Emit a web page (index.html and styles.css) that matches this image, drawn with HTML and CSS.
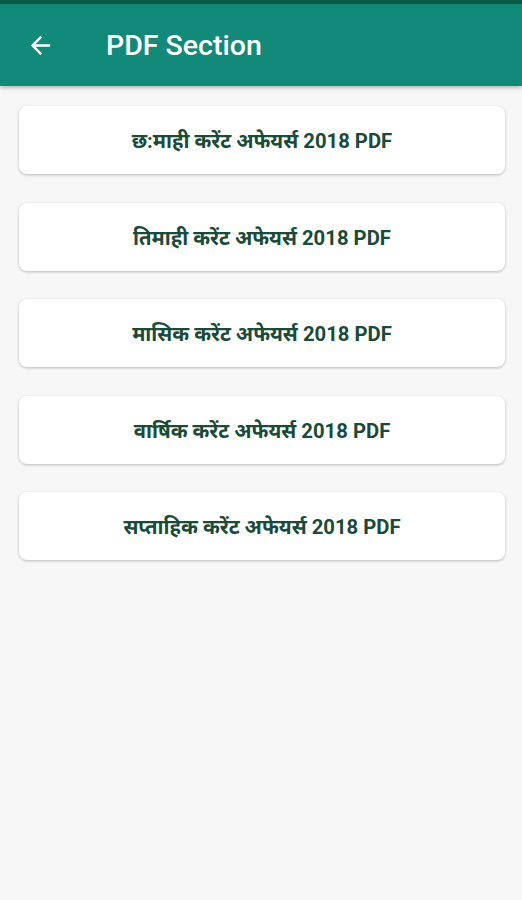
FILE: index.html
```html
<!DOCTYPE HTML><html>
<head>
  <meta name="viewport" content="width=device-width, initial-scale=1">
  <link rel="stylesheet" href="styles.css">
</head>
<body>
  <div class="statusbar"></div>
  <div class="appbar">
    <svg class="back" width="24" height="24" viewBox="0 0 24 24">
      <path d="M20 11H7.83l5.59-5.59L12 4l-8 8 8 8 1.41-1.41L7.83 13H20v-2z" fill="#fff"/>
    </svg>
    <h2>PDF Section</h2>
  </div>
  <div class="list">
    <div class="card">छ:माही करेंट अफेयर्स 2018 PDF</div>
    <div class="card">तिमाही करेंट अफेयर्स 2018 PDF</div>
    <div class="card">मासिक करेंट अफेयर्स 2018 PDF</div>
    <div class="card">वार्षिक करेंट अफेयर्स 2018 PDF</div>
    <div class="card">सप्ताहिक करेंट अफेयर्स 2018 PDF</div>
  </div>
</body>
</html>
```

FILE: styles.css
```css
html {font-family: Roboto, "Noto Sans", sans-serif;}
body {margin: 0; background-color: #f7f7f7; min-height: 900px;}
.statusbar {height: 4px; background-color: #0a5d4b;}
.appbar {
  height: 82px;
  background-color: #128a7a;
  display: flex;
  align-items: center;
  padding-left: 26px;
  box-shadow: 0 2px 4px rgba(0, 0, 0, 0.25);
}
.appbar .back {width: 29px; height: 29px; margin-top: 1px;}
.appbar h2 {
  margin: 1px 0 0 51px;
  color: #fff;
  font-size: 28.5px;
  font-weight: 500;
}
.list {
  display: flex;
  flex-direction: column;
  gap: 28.5px;
  padding: 20px 17px 0 19px;
}
.card {
  height: 68px;
  background-color: #fff;
  border-radius: 8px;
  box-shadow: 0 1px 3px rgba(0, 0, 0, 0.25);
  display: flex;
  align-items: center;
  justify-content: center;
  color: #1a4a38;
  font-size: 20.3px;
  font-weight: bold;
}
```
